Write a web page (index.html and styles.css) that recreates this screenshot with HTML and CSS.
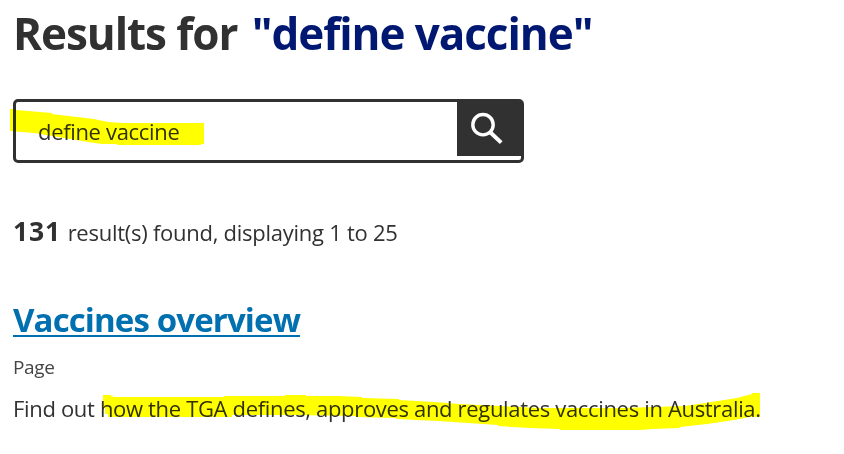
FILE: index.html
```html
<!DOCTYPE html>
<html lang="en">
<head>
  <meta charset="UTF-8">
  <title>Search results</title>
  <meta name="viewport" content="width=device-width, initial-scale=1.0">
  <link rel="stylesheet" href="styles.css">
</head>
<body>
  <main class="results-page">
    <h1><span class="lead">Results for</span> <span class="query">"define vaccine"</span></h1>

    <form class="search">
      <div class="search-text"><span>define vaccine</span></div>
      <button class="search-button" type="button" aria-label="Search">
        <svg width="64" height="54" viewBox="0 0 64 54" fill="none" stroke="#fff">
          <circle cx="26" cy="22.7" r="10.2" stroke-width="3.4"/>
          <path d="M33.2 30.2 44.2 40.6" stroke-width="4"/>
        </svg>
      </button>
      <svg class="marker marker-search" width="194" height="36" viewBox="0 0 194 36">
        <path d="M0 0H6V1L42 4V5L58 7L84 10L98 13L113 14H194V35H191V36H107V35H92L78 33L54 29L24 24L0 22Z"/>
      </svg>
    </form>

    <p class="count"><strong>131</strong> <span>result(s) found, displaying 1 to 25</span></p>

    <article class="result">
      <h2><a href="#">Vaccines overview</a></h2>
      <p class="type">Page</p>
      <p class="summary">
        <span>Find out how the TGA defines, approves and regulates vaccines in Australia.</span>
        <svg class="marker marker-summary" width="658" height="37" viewBox="0 0 658 37">
          <path d="M1 2H9V3L13 4H122V3H183V2H204V3H236L260 4V5L297 6V7L332 9L358 11L397 13L438 15H520L583 13L603 10L635 5L650 1V0H658V24H648L632 27L605 31L578 34V35L550 36L538 37H458V36L428 35L396 33V32L336 28L294 26V25L254 24V23L192 22H130V24H6V21H3V15H1Z"/>
        </svg>
      </p>
    </article>
  </main>
</body>
</html>
```
FILE: styles.css
```css
* {
  box-sizing: border-box;
}
body {
  margin: 0;
  min-height: 100vh;
  background: #fff;
  color: #313131;
  font-family: "Open Sans", "Noto Sans", sans-serif;
  font-size: 22px;
  letter-spacing: -0.33px;
}
.results-page {
  min-height: 100vh;
  padding: 6px 13px 0;
  white-space: nowrap;
}
h1 {
  margin: 0;
  font-size: 44px;
  line-height: 54px;
  font-weight: 700;
  letter-spacing: -1.05px;
}
.query {
  margin-left: 4px;
  color: #001871;
}
.search {
  position: relative;
  display: flex;
  width: 511px;
  height: 64px;
  margin: 39px 0 50px;
  border: 3px solid #313131;
  border-radius: 5px;
}
.search-text {
  flex: 1;
  padding-left: 22px;
  line-height: 58px;
}
.search-button {
  width: 64px;
  height: 54px;
  padding: 0;
  border: 0;
  background: #313131;
}
.search-button svg {
  display: block;
}
/* highlighter strokes drawn over the text */
.marker {
  position: absolute;
  fill: #ff0;
  mix-blend-mode: multiply;
}
.marker-search {
  left: -6px;
  top: 7px;
}
.count {
  margin: 0 0 50px;
  line-height: 36px;
  letter-spacing: -0.26px;
}
.count strong {
  margin-right: 1px;
  font-size: 26.5px;
  letter-spacing: 0.9px;
}
h2 {
  margin: 0 0 14px;
  font-size: 33px;
  line-height: 40px;
  letter-spacing: -0.87px;
}
h2 a {
  color: #0070b0;
  text-decoration-thickness: 2px;
  text-underline-offset: 3px;
  text-decoration-skip-ink: none;
}
.type {
  margin: 0 0 12px;
  color: #454545;
  font-size: 19px;
  line-height: 26px;
}
.summary {
  position: relative;
  margin: 0;
  line-height: 32px;
}
.marker-summary {
  left: 89px;
  top: 1px;
}
```
